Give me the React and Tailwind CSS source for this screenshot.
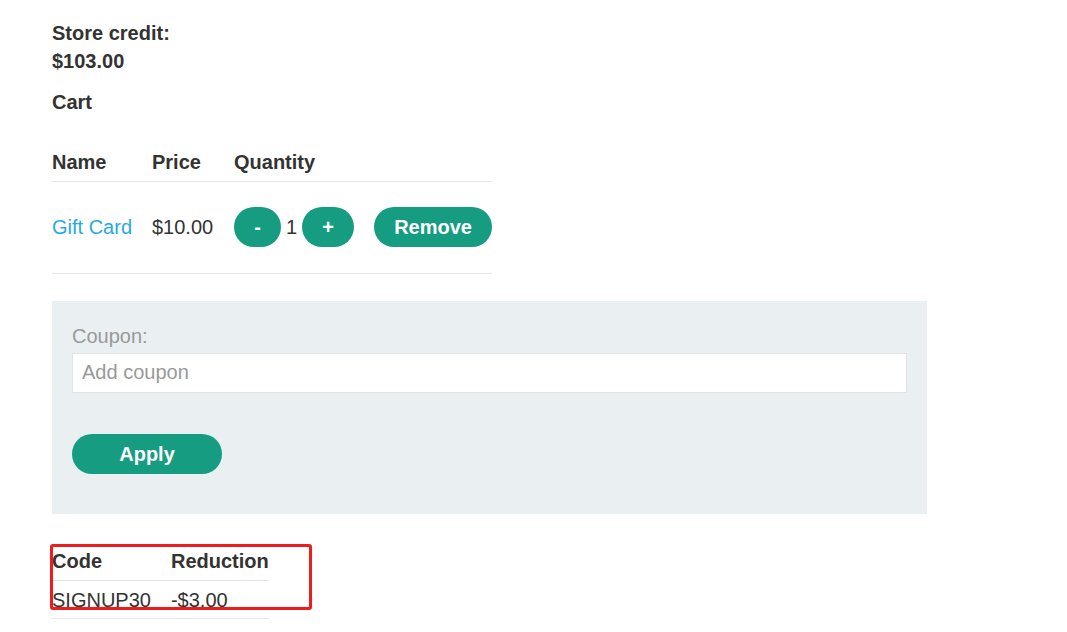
export default function App() {
  return (
    <div className="relative min-h-[632px] bg-white pl-[52px] pt-[19px] text-[20px] leading-[28px] text-[#333332]" style={{ fontFamily: '"Liberation Sans", Arial, sans-serif' }}>
      <p className="w-[140px] font-bold">Store credit: $103.00</p>
      <p className="mt-[13px] font-bold">Cart</p>
      <table className="mt-[25px] w-[440px] table-fixed border-collapse">
        <thead>
          <tr className="border-b border-[#e6e6e6]">
            <th className="h-[40px] w-[100px] pr-5 pt-[2px] text-left align-middle font-bold">Name</th>
            <th className="h-[40px] w-[82px] pr-5 pt-[2px] text-left align-middle font-bold">Price</th>
            <th className="h-[40px] pt-[2px] text-left align-middle font-bold">Quantity</th>
          </tr>
        </thead>
        <tbody>
          <tr className="border-b border-[#e6e6e6]">
            <td className="h-[92px] whitespace-nowrap align-middle">
              <a className="text-[#29a9e1]" href="#">Gift Card</a>
            </td>
            <td className="h-[92px] whitespace-nowrap align-middle">$10.00</td>
            <td className="h-[92px] align-middle">
              <div className="flex items-center">
                <button className="h-10 w-[47px] rounded-full bg-[#169c80] font-bold text-white">-</button>
                <span className="mx-[5px]">1</span>
                <button className="h-10 w-[52px] rounded-full bg-[#169c80] font-bold text-white">+</button>
                <button className="ml-5 h-10 w-[118px] rounded-full bg-[#169c80] font-bold text-white">Remove</button>
              </div>
            </td>
          </tr>
        </tbody>
      </table>
      <div className="mt-[27px] w-[875px] bg-[#eaeff1] px-5 pt-[21px] pb-10">
        <label className="block text-[#999999]">Coupon:</label>
        <input
          className="mt-[3px] block h-10 w-full border border-[#e0e3e5] bg-white px-[9px] text-[20px] text-[#333332] outline-none placeholder:text-[#999999]"
          placeholder="Add coupon"
        />
        <button className="mt-[41px] h-10 w-[150px] rounded-full bg-[#169c80] font-bold text-white">Apply</button>
      </div>
      <table className="mt-[27px] border-collapse">
        <thead>
          <tr className="border-b border-[#e6e6e6]">
            <th className="h-[40px] pr-5 pt-[1px] text-left align-middle font-bold">Code</th>
            <th className="h-[40px] pt-[1px] text-left align-middle font-bold">Reduction</th>
          </tr>
        </thead>
        <tbody>
          <tr className="border-b border-[#e6e6e6]">
            <td className="h-[38px] pr-5 align-middle">SIGNUP30</td>
            <td className="h-[38px] align-middle">-$3.00</td>
          </tr>
        </tbody>
      </table>
      <div className="pointer-events-none absolute left-[50px] top-[544px] h-[66px] w-[262px] rounded-[3px] border-[3px] border-[#ee1c1c]"></div>
    </div>
  );
}
